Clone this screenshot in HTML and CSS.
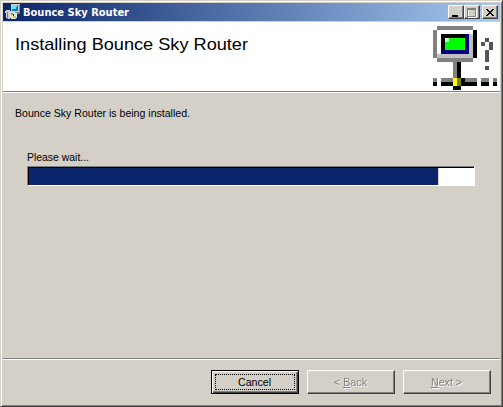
FILE: index.html
```
<!DOCTYPE html>
<html lang="en"><head><meta charset="utf-8"><title>Bounce Sky Router</title><link rel="stylesheet" href="styles.css"></head>
<body>
<div class="window">
<header class="titlebar">
<svg class="appicon" width="16" height="16" viewBox="0 0 16 16" shape-rendering="crispEdges">
<path fill="#d4d0c8" d="M6 0h9v9H6zM1 6h4v1h1v2H5v6H3V9H2v5H1V9H0V7h1z"/><path fill="#808080" d="M14 1h1v9h-4V9h3zM2 8h1v7H2zM8 8h6v1H8z"/><path fill="#087bc0" d="M7 1h6v6H7z"/><path fill="#62e6f5" d="M7 1h5v2h-1v2H7z"/>
<path fill="#e4e6df" d="M6 8h4v1h2v5h-1v1H6v-1H5V9h1z"/><path fill="#719b45" d="M6 9h2v2H6z"/><path fill="#e2c542" d="M8 12h3v2H8z"/><path fill="#333" d="M8 10h1v2H8z"/>
</svg>
<svg class="title" width="118" height="18"><text x="0" y="13" textLength="106" lengthAdjust="spacingAndGlyphs">Bounce Sky Router</text></svg>
<div class="controls">
<span class="ctl"><svg width="12" height="10" shape-rendering="crispEdges"><path fill="#000" d="M2 8h6v2H2z"/></svg></span>
<span class="ctl"><svg width="12" height="11" shape-rendering="crispEdges"><path fill="none" stroke="#fff" d="M2.5 2.5h8v8h-8z"/><path fill="none" stroke="#808080" d="M1.5 1.5h8v8h-8zM1 2.5h9"/></svg></span>
<span class="ctl close"><svg width="12" height="10" shape-rendering="crispEdges"><path fill="#000" d="M2 2h2v1h1v1h2V3h1V2h2v1H9v1H8v1H7v1h1v1h1v1h1v1H8V8H7V7H5v1H4v1H2V8h1V7h1V6h1V5H4V4H3V3H2z"/></svg></span>
</div>
</header>
<section class="banner">
<svg class="heading" width="250" height="34"><text x="0" y="22" textLength="233" lengthAdjust="spacingAndGlyphs">Installing Bounce Sky Router</text></svg>
<svg class="network" width="64" height="64" viewBox="0 0 16 16" shape-rendering="crispEdges">
<path fill="#808080" d="M1 0h9v1H1zM0 1h1v7H0zM1 8h9v1H1zM5 9h1v4H5zM0 13h1v1H0zM2 13h3v1H2zM8 13h3v1H8zM12 13h2v1h-2zM15 13h1v1h-1z"/>
<path fill="#c0c0c0" d="M1 1h9v7H1z"/><path fill="#fff" d="M1 1h9v1H2v5H1z"/>
<path fill="#000" d="M10 1h1v7h-1zM2 2h6v1H3v3H2zM6 9h1v4H6zM0 14h1v1H0zM2 14h3v1H2zM7 13h1v1h3v1H7zM12 14h2v1h-2zM15 14h1v1h-1zM5 15h2v1H5z"/>
<path fill="#000080" d="M8 2h1v5H2V6h6z"/><path fill="#0f0" d="M3 3h5v3H3z"/><path fill="#c0ffc0" d="M3 3h1v1H3z"/><path fill="#ff0" d="M5 13h1v2H5z"/><path fill="#808000" d="M6 13h1v2H6z"/>
<path fill="#555" d="M13 3h1v1h-1zM12 4h1v1h-1zM14 4h1v2h-1zM13 6h1v3h-1zM13 10h1v1h-1z"/>
</svg>
</section>
<main class="content">
<svg class="message" width="200" height="20"><text x="0" y="14" textLength="175" lengthAdjust="spacingAndGlyphs">Bounce Sky Router is being installed.</text></svg>
<svg class="wait" width="100" height="19"><text x="0" y="14" textLength="62" lengthAdjust="spacingAndGlyphs">Please wait...</text></svg>
<div class="progress"><div class="fill"></div></div>
</main>
<footer class="footer">
<button class="btn default"><svg width="50" height="18"><text x="8" y="13" textLength="33" lengthAdjust="spacingAndGlyphs">Cancel</text></svg></button>
<button class="btn" disabled><svg width="50" height="18"><text x="8" y="13" textLength="33" lengthAdjust="spacingAndGlyphs">&lt; <tspan class="key">B</tspan>ack</text></svg></button>
<button class="btn next" disabled><svg width="50" height="18"><text x="9" y="13" textLength="31" lengthAdjust="spacingAndGlyphs"><tspan class="key">N</tspan>ext &gt;</text></svg></button>
</footer>
</div>
</body></html>
```
FILE: styles.css
```
* { box-sizing: border-box; }
body { margin: 0; background: #d4d0c8; font: 11px "Liberation Sans", sans-serif; }
svg { display: block; flex: none; }
.window { width: 503px; height: 407px; padding: 2px; border: 1px solid; border-color: #d4d0c8 #404040 #404040 #d4d0c8; box-shadow: inset 1px 1px #fff, inset -1px -1px #808080; background: #d4d0c8; display: flex; flex-direction: column; }
.titlebar { height: 18px; flex: none; display: flex; align-items: center; background: linear-gradient(90deg, #0a246a, #a6caf0); padding: 0 2px; }
.appicon { margin-right: 2px; }
.title text { font: bold 11px "DejaVu Sans", sans-serif; fill: #fff; }
.controls { display: flex; margin-left: auto; }
.ctl { width: 16px; height: 14px; padding: 1px; background: #d4d0c8; border: 1px solid; border-color: #fff #404040 #404040 #fff; box-shadow: inset -1px -1px #808080; }
.close { margin-left: 2px; }
.banner { height: 70px; flex: none; margin: 1px 0 0; background: #fff; border-bottom: 1px solid #808080; display: flex; justify-content: space-between; padding: 4px 3px 0 12px; }
.heading { margin-top: 2px; }
.heading text { font: 17px "Liberation Sans", sans-serif; fill: #000; }
.content { flex: 1; border-top: 1px solid #fff; padding: 10px 0 0 12px; }
.message text, .wait text, .btn text { font: 11.5px "Liberation Sans", sans-serif; fill: #000; }
.wait { margin: 24px 0 0 12px; }
.progress { width: 448px; height: 20px; margin: 0 0 0 12px; border: 1px solid; border-color: #808080 #fff #fff #808080; background: #fff; box-shadow: inset 1px 1px #000; padding: 1px 0 0 1px; }
.fill { width: 410px; height: 17px; background: #0a246a; border-right: 1px solid #d4d0c8; }
.footer { height: 46px; flex: none; border-top: 1px solid #808080; box-shadow: inset 0 1px #fff; display: flex; padding: 11px 0 0 208px; }
.btn { width: 88px; height: 24px; margin: 0 8px 0 0; padding: 0; display: flex; align-items: center; justify-content: center; background: #d4d0c8; border: 1px solid; border-color: #fff #404040 #404040 #fff; box-shadow: inset -1px -1px #808080; }
.default { border-color: #000; box-shadow: inset 1px 1px #fff, inset -1px -1px #404040, inset -2px -2px #808080; outline: 1px dotted #000; outline-offset: -5px; }
.btn:disabled text { fill: #808080; filter: drop-shadow(1px 1px 0 #fff); }
.key { text-decoration: underline; }
```
